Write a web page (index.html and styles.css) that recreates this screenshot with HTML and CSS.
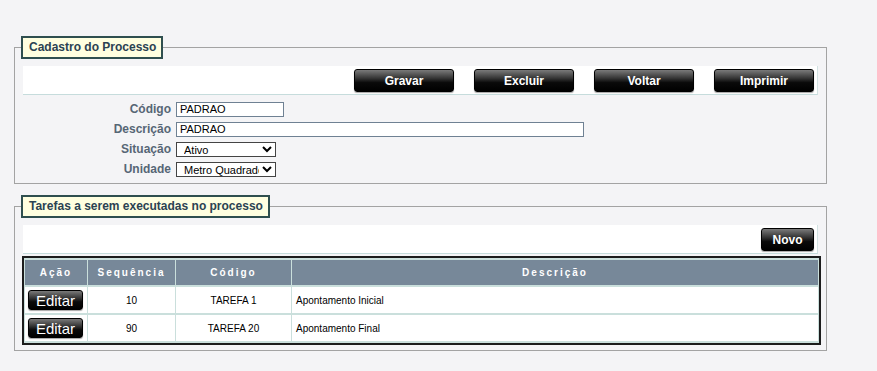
FILE: index.html
```html
<!DOCTYPE html>
<html lang="pt-BR">
<head>
  <meta charset="UTF-8">
  <meta name="viewport" content="width=device-width, initial-scale=1.0">
  <title>Cadastro do Processo</title>
  <link rel="stylesheet" href="styles.css">
</head>
<body>
  <fieldset class="panel">
    <legend class="panel-title">Cadastro do Processo</legend>
    <div class="toolbar">
      <button class="btn">Gravar</button>
      <button class="btn">Excluir</button>
      <button class="btn">Voltar</button>
      <button class="btn">Imprimir</button>
    </div>
    <div class="form">
      <label class="form-label">Código</label>
      <input class="field field-code" type="text" value="PADRAO">
      <label class="form-label">Descrição</label>
      <input class="field field-desc" type="text" value="PADRAO">
      <label class="form-label">Situação</label>
      <select class="field field-select">
        <option>Ativo</option>
        <option>Inativo</option>
      </select>
      <label class="form-label">Unidade</label>
      <select class="field field-select">
        <option>Metro Quadrado</option>
        <option>Unidade</option>
      </select>
    </div>
  </fieldset>

  <fieldset class="panel panel-tasks">
    <legend class="panel-title">Tarefas a serem executadas no processo</legend>
    <div class="toolbar">
      <button class="btn btn-small">Novo</button>
    </div>
    <table class="grid">
      <thead>
        <tr>
          <th class="col-action">Ação</th>
          <th class="col-seq">Sequência</th>
          <th class="col-code">Código</th>
          <th>Descrição</th>
        </tr>
      </thead>
      <tbody>
        <tr>
          <td class="cell-action"><button class="btn btn-edit">Editar</button></td>
          <td class="cell-center">10</td>
          <td class="cell-center">TAREFA 1</td>
          <td>Apontamento Inicial</td>
        </tr>
        <tr>
          <td class="cell-action"><button class="btn btn-edit">Editar</button></td>
          <td class="cell-center">90</td>
          <td class="cell-center">TAREFA 20</td>
          <td>Apontamento Final</td>
        </tr>
      </tbody>
    </table>
  </fieldset>
</body>
</html>
```

FILE: styles.css
```css
body {
  margin: 0;
  background-color: #f4f4f6;
  font-family: "Liberation Sans", Arial, sans-serif;
}
.panel {
  width: 795px;
  min-width: 0;
  margin: 36px 0 0 14px;
  padding: 7px 8px 4px 8px;
  border: 1px solid #a3a3a3;
}
.panel-tasks {
  margin-top: 11px;
  padding-bottom: 5px;
}
.panel-title {
  margin-left: -2px;
  padding: 2px 5px 2px 6px;
  line-height: 15px;
  border: 2px solid #2f4f4f;
  background-color: #ffffe0;
  color: #2b4252;
  font-size: 12px;
  font-weight: bold;
}
.toolbar {
  display: flex;
  justify-content: flex-end;
  gap: 20px;
  height: 29px;
  padding: 3px 3px 0 0;
  box-sizing: border-box;
  background-color: #fff;
  border-right: 1px solid #d2e2e2;
  border-bottom: 1px solid #c6dcdc;
}
.btn {
  width: 100px;
  height: 23px;
  padding: 0;
  border: 1px solid #000;
  border-radius: 3px;
  background: linear-gradient(#7a7a7a, #333 40%, #0a0a0a 60%, #000);
  box-shadow: 0 1px 1px rgba(0, 0, 0, .35);
  color: #fff;
  font-family: "Liberation Sans", Arial, sans-serif;
  font-size: 12px;
  font-weight: bold;
  cursor: pointer;
}
.btn-small {
  width: 53px;
}
.form {
  display: grid;
  grid-template-columns: 148px auto;
  grid-auto-rows: 20px;
  column-gap: 5px;
  align-items: center;
  justify-items: start;
  margin-top: 4px;
}
.form-label {
  justify-self: end;
  color: #566675;
  font-size: 12px;
  font-weight: bold;
}
.field {
  box-sizing: border-box;
  height: 15px;
  padding: 0 3px;
  border: 1px solid #6f8193;
  background-color: #fff;
  font-family: "Liberation Sans", Arial, sans-serif;
  font-size: 11px;
  color: #000;
}
.field-code {
  width: 108px;
}
.field-desc {
  width: 408px;
}
.field-select {
  width: 100px;
  height: 15px;
  padding: 0 0 0 3px;
  border-color: #444;
  font-size: 11px;
}
.grid {
  width: 799px;
  margin: 2px 0 0 -1px;
  border: 2px solid #1c1c1c;
  border-spacing: 1px 2px;
  background-color: #cadfdc;
  font-size: 10px;
}
.grid th {
  height: 25px;
  padding: 0;
  background-color: #778899;
  color: #fff;
  font-size: 10px;
  letter-spacing: 2px;
}
.grid td {
  height: 26px;
  padding: 0 4px;
  background-color: #fff;
  color: #000;
}
.col-action {
  width: 62px;
}
.col-seq {
  width: 87px;
}
.col-code {
  width: 115px;
}
.grid .cell-action {
  padding: 0 3px;
}
.cell-center {
  text-align: center;
}
.btn-edit {
  display: block;
  width: 55px;
  height: 20px;
  font-size: 15px;
  font-weight: normal;
}
```
